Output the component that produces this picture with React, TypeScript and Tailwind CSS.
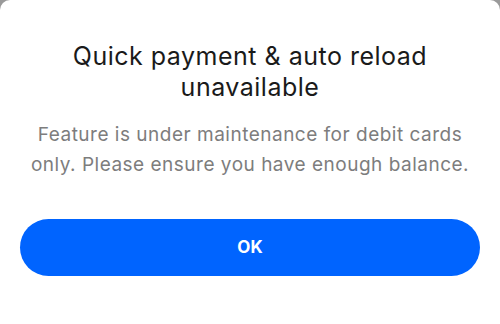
export default function App() {
    return (
        <div className="w-[500px] h-[324px] bg-[#9a9a9a]">
            <div className="w-full h-full bg-white rounded-t-[10px] flex flex-col items-center px-4 pt-[41px] font-['Inter',sans-serif]">
                <h1 className="text-[25px] leading-[31px] tracking-[0.5px] text-[#1a1a1a] text-center px-12">
                    Quick payment &amp; auto reload unavailable
                </h1>
                <p className="mt-[17px] text-[19px] leading-[30px] tracking-[0.5px] text-[#7d7d7d] text-center">
                    Feature is under maintenance for debit cards only. Please ensure you have enough balance.
                </p>
                <button className="mt-[39px] w-[460px] h-[57px] rounded-full bg-[#0064ff] text-white font-bold text-[17px]">
                    OK
                </button>
            </div>
        </div>
    )
}
